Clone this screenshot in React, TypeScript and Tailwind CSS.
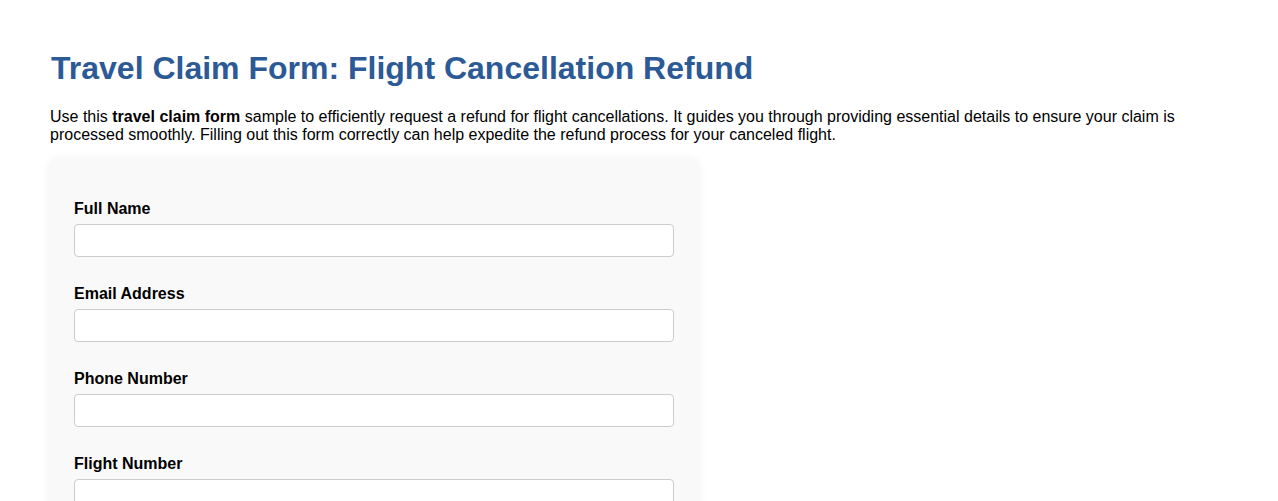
import React from "react";

const fields = [
  "Full Name",
  "Email Address",
  "Phone Number",
  "Flight Number",
  "Date of Flight",
  "Reason for Cancellation",
];

export default function App() {
  return (
    <div
      className="bg-white text-black px-[50px] pb-10"
      style={{ fontFamily: '"Liberation Sans", Arial, sans-serif' }}
    >
      <h1 className="pt-[50px] pl-[1px] text-[32px] leading-[36px] font-bold text-[#2c5a96]">
        Travel Claim Form: Flight Cancellation Refund
      </h1>
      <p className="mt-[22px] text-[16px] leading-[18px]">
        Use this <strong className="font-bold">travel claim form</strong> sample to efficiently request a refund for flight cancellations. It guides you through providing essential details to ensure your claim is processed smoothly. Filling out this form correctly can help expedite the refund process for your canceled flight.
      </p>
      <div className="mt-[15px] -ml-px w-[650px] rounded-lg bg-[#f9f9f9] px-[25px] pt-[41px] pb-[25px] shadow-[0_0_10px_rgba(0,0,0,0.06)]">
        {fields.map((f) => (
          <div key={f} className="mb-[28px]">
            <label className="block text-[16px] leading-[18px] font-bold mb-[6px]">{f}</label>
            <input
              type="text"
              className="block w-full h-[33px] rounded-[4px] border border-[#cccccc] bg-white px-2 text-[16px]"
            />
          </div>
        ))}
      </div>
    </div>
  );
}
